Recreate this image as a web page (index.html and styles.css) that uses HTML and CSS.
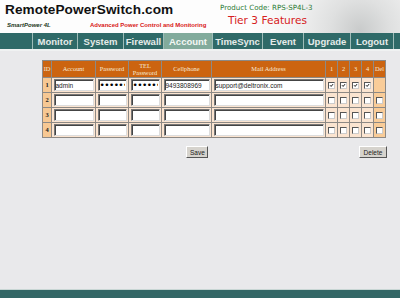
FILE: index.html
```html
<!DOCTYPE html>
<html lang="en">
  <head>
    <meta charset="UTF-8" />
    <title>Account</title>
    <link rel="stylesheet" href="styles.css">
  </head>
  <body>
    <div class="header">
      <div class="brand">
        <div class="site">RemotePowerSwitch.com</div>
        <div class="sub">
          <span class="model">SmartPower 4L</span>
          <span class="slogan">Advanced Power Control and Monitoring</span>
        </div>
      </div>
      <div class="product">
        <div class="code">Product Code: RPS-SP4L-3</div>
        <div class="tier">Tier 3 Features</div>
      </div>
    </div>

    <div class="nav">
      <div class="nav_pad"></div>
      <a class="nav_item w45">Monitor</a>
      <a class="nav_item w46">System</a>
      <a class="nav_item w40">Firewall</a>
      <a class="nav_item w49 active">Account</a>
      <a class="nav_item w50">TimeSync</a>
      <a class="nav_item w41">Event</a>
      <a class="nav_item w47">Upgrade</a>
      <a class="nav_item w44">Logout</a>
    </div>

    <div class="main">
      <table class="accounts">
        <tr class="head">
          <th class="c_id">ID</th>
          <th class="c_acc">Account</th>
          <th class="c_pw">Password</th>
          <th class="c_pw">TEL<br>Password</th>
          <th class="c_cell">Cellphone</th>
          <th class="c_mail">Mail Address</th>
          <th class="c_ch">1</th>
          <th class="c_ch">2</th>
          <th class="c_ch">3</th>
          <th class="c_ch">4</th>
          <th class="c_del">Del</th>
        </tr>
        <tr>
          <td class="id">1</td>
          <td><input class="field" type="text" value="admin"></td>
          <td><input class="field pw" type="password" value="secret"></td>
          <td><input class="field pw" type="password" value="secret"></td>
          <td><input class="field" type="text" value="9493808969"></td>
          <td><input class="field" type="text" value="support@deltronix.com"></td>
          <td><span class="cb"><svg viewBox="0 0 7 7"><path d="M1.5 3.2 L3 4.8 L5.6 1.6" /></svg></span></td>
          <td><span class="cb"><svg viewBox="0 0 7 7"><path d="M1.5 3.2 L3 4.8 L5.6 1.6" /></svg></span></td>
          <td><span class="cb"><svg viewBox="0 0 7 7"><path d="M1.5 3.2 L3 4.8 L5.6 1.6" /></svg></span></td>
          <td><span class="cb"><svg viewBox="0 0 7 7"><path d="M1.5 3.2 L3 4.8 L5.6 1.6" /></svg></span></td>
          <td class="del"></td>
        </tr>
        <tr>
          <td class="id">2</td>
          <td><input class="field" type="text"></td>
          <td><input class="field pw" type="password"></td>
          <td><input class="field pw" type="password"></td>
          <td><input class="field" type="text"></td>
          <td><input class="field" type="text"></td>
          <td><span class="cb"></span></td>
          <td><span class="cb"></span></td>
          <td><span class="cb"></span></td>
          <td><span class="cb"></span></td>
          <td class="del"><span class="cb"></span></td>
        </tr>
        <tr>
          <td class="id">3</td>
          <td><input class="field" type="text"></td>
          <td><input class="field pw" type="password"></td>
          <td><input class="field pw" type="password"></td>
          <td><input class="field" type="text"></td>
          <td><input class="field" type="text"></td>
          <td><span class="cb"></span></td>
          <td><span class="cb"></span></td>
          <td><span class="cb"></span></td>
          <td><span class="cb"></span></td>
          <td class="del"><span class="cb"></span></td>
        </tr>
        <tr>
          <td class="id">4</td>
          <td><input class="field" type="text"></td>
          <td><input class="field pw" type="password"></td>
          <td><input class="field pw" type="password"></td>
          <td><input class="field" type="text"></td>
          <td><input class="field" type="text"></td>
          <td><span class="cb"></span></td>
          <td><span class="cb"></span></td>
          <td><span class="cb"></span></td>
          <td><span class="cb"></span></td>
          <td class="del"><span class="cb"></span></td>
        </tr>
      </table>

      <div class="buttons">
        <button class="btn save_btn">Save</button>
        <button class="btn delete_btn">Delete</button>
      </div>
    </div>

    <div class="footer"></div>
  </body>
</html>
```

FILE: styles.css
```css
html,
body {
  margin: 0;
  padding: 0;
  width: 100%;
  height: 100%;
  font-family: "Liberation Sans", Arial, sans-serif;
  background-color: #e9e9eb;
}

body {
  display: flex;
  flex-direction: column;
}

.header {
  height: 33px;
  display: flex;
  background: radial-gradient(circle at 360px 30px, #c9cbcb 0, #dfe0e0 30px, #f4f4f4 70px, #fdfdfd 110px), #fdfdfd;
  box-sizing: border-box;
}

.brand {
  width: 218px;
  padding: 1px 0 0 5px;
  box-sizing: border-box;
}

.site {
  font-size: 13.6px;
  font-weight: bold;
  color: #111;
  line-height: 17px;
  letter-spacing: 0.1px;
}

.sub {
  display: flex;
  margin-top: 3px;
  line-height: 9px;
  font-size: 6px;
  font-weight: bold;
}

.model {
  font-style: italic;
  color: #1d3a1d;
  margin-left: 2px;
  width: 83px;
}

.slogan {
  color: #d81818;
}

.product {
  padding-top: 3px;
}

.code {
  font-family: "DejaVu Sans", sans-serif;
  font-size: 7.1px;
  color: #2c7b35;
  margin-left: 2px;
  line-height: 10px;
}

.tier {
  font-family: "DejaVu Sans", sans-serif;
  font-size: 10.6px;
  color: #d62020;
  margin-left: 10px;
  line-height: 14px;
}

.nav {
  height: 16px;
  display: flex;
  background-color: #2f6a68;
  border-bottom: 2px solid #f0f2f2;
}

.nav_pad {
  width: 32px;
}

.nav_item {
  display: flex;
  justify-content: center;
  align-items: center;
  border-left: 1px solid #9fbcb8;
  box-sizing: border-box;
  color: #e6ecea;
  font-size: 9.5px;
  font-weight: bold;
}

.nav_item:last-child {
  border-right: 1px solid #9fbcb8;
}

.nav_item.active {
  background-color: #82ab9c;
  color: #f4f8f4;
}

.w40 { width: 40px; }
.w41 { width: 41px; }
.w44 { width: 44px; }
.w45 { width: 45px; }
.w46 { width: 46px; }
.w47 { width: 47px; }
.w49 { width: 49px; }
.w50 { width: 50px; }

.main {
  flex: 1;
  padding: 9px 0 0 42px;
}

.accounts {
  width: 344px;
  border-collapse: collapse;
  border: 1px solid #8d8985;
  table-layout: fixed;
}

.accounts th,
.accounts td {
  border: 1px solid #8d8985;
  padding: 0;
}

.head th {
  height: 16px;
  background-color: #cc6410;
  color: #f6ead6;
  font-family: "Liberation Serif", "Times New Roman", serif;
  font-weight: normal;
  font-size: 6.4px;
  line-height: 7.5px;
}

.c_id { width: 8px; }
.c_acc { width: 43px; }
.c_pw { width: 32px; }
.c_cell { width: 49px; }
.c_mail { width: 113px; }
.c_ch { width: 11px; }
.c_del { width: 11px; }

.accounts td {
  height: 14px;
  background-color: #fbe4d0;
  text-align: center;
  font-size: 0;
  line-height: 0;
}

.accounts td.id {
  background-color: #f7c893;
  font-family: "Liberation Serif", serif;
  font-weight: bold;
  font-size: 6.5px;
  line-height: 8px;
  color: #222;
}

.accounts td.del {
  background-color: #f9cc98;
}

.field {
  display: block;
  width: calc(100% - 3px);
  height: 12px;
  margin: 0 auto;
  padding: 0 1px;
  box-sizing: border-box;
  border: 1px solid #777;
  border-right-color: #ddd;
  border-bottom-color: #ddd;
  box-shadow: inset 1px 1px 0 #444;
  background: #fff;
  font-family: "Liberation Sans", Arial, sans-serif;
  font-size: 6.5px;
  line-height: 10px;
  color: #222;
  outline: none;
}

.field.pw {
  font-family: "DejaVu Sans", sans-serif;
  font-size: 9px;
  letter-spacing: -0.6px;
  color: #000;
}

.cb {
  display: inline-block;
  width: 7px;
  height: 7px;
  box-sizing: border-box;
  border: 1px solid #555;
  border-right-color: #ccc;
  border-bottom-color: #ccc;
  background: #fff;
  vertical-align: middle;
}

.cb svg {
  display: block;
  width: 5px;
  height: 5px;
  fill: none;
  stroke: #111;
  stroke-width: 1.4;
}

.buttons {
  width: 345px;
  display: flex;
  margin-top: 8px;
}

.btn {
  height: 12px;
  padding: 0 3px;
  background-color: #d6d3cd;
  border: 1px solid #fff;
  border-right-color: #555;
  border-bottom-color: #555;
  font-family: "Liberation Sans", Arial, sans-serif;
  font-size: 6.5px;
  color: #222;
  line-height: 9px;
}

.save_btn {
  margin-left: 144px;
  width: 22px;
}

.delete_btn {
  margin-left: auto;
  width: 28px;
}

.footer {
  height: 8px;
  background-color: #336766;
  border-top: 1px solid #c8d6d4;
}
```
